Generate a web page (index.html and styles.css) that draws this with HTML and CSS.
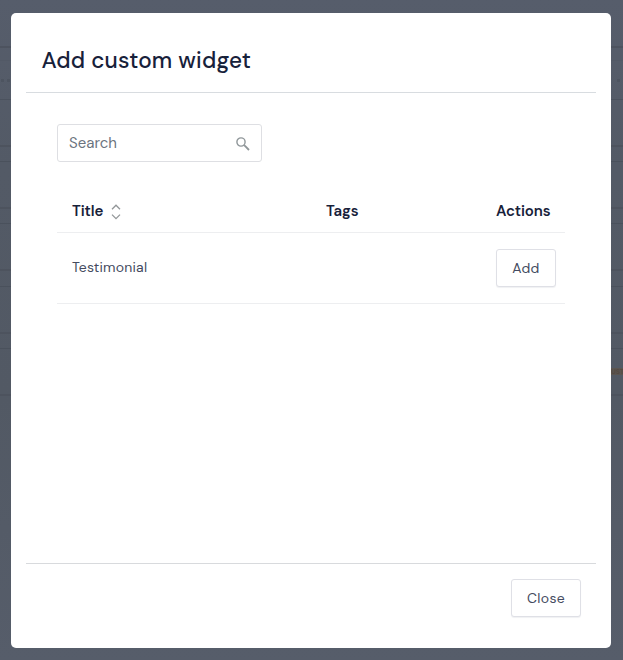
FILE: index.html
```html
<!DOCTYPE html>
<html lang="en">
<head>
<meta charset="utf-8">
<title>Add custom widget</title>
<link rel="stylesheet" href="styles.css">
</head>
<body>
<div class="page">
  <div class="bar bar-top"></div>
  <div class="bar bar-tools"></div>
  <div class="dots"><i></i><i></i><b></b><i></i><i></i></div>
  <div class="panel"></div><div class="gap"></div>
  <div class="panel"></div><div class="gap"></div>
  <div class="panel"></div><div class="gap"></div>
  <div class="panel"></div><div class="gap"></div>
  <div class="panel tagged"><span class="tag">UST</span></div>
</div>
<main class="modal">
  <header class="head"><h1>Add custom widget</h1></header>
  <section class="body">
    <label class="search">
      <input type="text" placeholder="Search">
      <svg width="14" height="14" viewBox="0 0 14 14" fill="none" stroke="#8f9699"><circle cx="5" cy="5" r="4.1" stroke-width="1.4"/><path d="M8.2 8.2L13 13" stroke-width="1.8"/></svg>
    </label>
    <div class="table">
      <div class="row th">
        <div class="title">Title
          <svg width="10" height="16" viewBox="0 0 10 16" fill="none" stroke="#929698" stroke-width="1.3"><path d="M1 5.2L5 1.2l4 4M1 10.6l4 4 4-4"/></svg>
        </div>
        <div class="tags">Tags</div>
        <div class="actions">Actions</div>
      </div>
      <div class="row td">
        <div class="name">Testimonial</div>
        <div></div>
        <div><button class="add">Add</button></div>
      </div>
    </div>
  </section>
  <footer class="foot"><button class="close">Close</button></footer>
</main>
</body>
</html>
```
FILE: styles.css
```css
* { box-sizing: border-box; }
body {
  margin: 0;
  height: 660px;
  overflow: hidden;
  background: #545b68;
  color: #444b60;
  font-family: "DM Sans", Inter, sans-serif;
}
.page {
  height: 660px;
  background: linear-gradient(#565d6b 0, #535a66 25%, #525964 60%, #565d6a 100%);
}
.bar-top { height: 48px; border-bottom: 2px solid #4d535f; }
.bar-tools { height: 13px; border-bottom: 1px solid #525966; }
.dots { height: 39px; padding-top: 18px; border-bottom: 1px solid #4b525e; display: flex; gap: 3px; }
.dots i { flex: none; width: 3px; height: 3px; background: #4d5460; }
.dots i:first-child { margin-left: 1px; }
.dots b { flex: none; width: 601px; }
.panel { height: 47px; border-bottom: 2px solid #4d535e; }
.gap { height: 15.2px; border-bottom: 1px solid #4a515c; }
.tagged { display: flex; justify-content: flex-end; align-items: center; }
.tag { width: 12px; overflow: hidden; font-size: 7px; line-height: 7px; font-weight: 800; color: #544a43; background: #5a5551; }
.modal {
  position: absolute;
  left: 11px;
  top: 13px;
  width: 600px;
  height: 635px;
  padding: 0 15px;
  display: flex;
  flex-direction: column;
  background: #fff;
  border-radius: 5px;
}
.head { height: 80px; padding: 33px 15.5px 0; border-bottom: 1px solid #d8dce0; }
h1 { margin: 0; font-size: 22.5px; line-height: 30px; font-weight: 500; color: #17213a; white-space: nowrap; letter-spacing: .18px; }
.body { flex: 1; padding: 31px 31px 0; }
.search {
  width: 205px;
  height: 38px;
  padding: 0 11px;
  display: flex;
  align-items: center;
  justify-content: space-between;
  border: 1px solid #dedfe3;
  border-radius: 3px;
}
.search svg { margin-top: 2px; }
.search input { width: 140px; padding: 0; border: 0; outline: 0; font: 15px/20px "DM Sans", Inter, sans-serif; letter-spacing: 0; }
.search input::placeholder { color: #6b7480; opacity: 1; }
.table { margin-top: 28px; }
.row { display: grid; grid-template-columns: 254px 170px 70px; padding-left: 15px; border-bottom: 1px solid #edeef0; }
.th { height: 43px; padding-top: 11px; font-size: 15px; line-height: 20px; font-weight: 600; color: #17213a; align-items: start; letter-spacing: -.1px; }
.title { display: flex; align-items: center; gap: 8px; }
.title svg { margin-top: 2px; }
.td { height: 71px; padding-top: 16px; }
.name { padding-top: 8px; font-size: 14px; line-height: 20px; letter-spacing: .2px; }
button {
  height: 38px;
  padding: 0;
  display: block;
  background: #fff;
  border: 1px solid #dfe0e6;
  border-radius: 3px;
  box-shadow: 0 1px 1px #f0f1f3;
  color: #444b60;
  font: 14px/20px "DM Sans", Inter, sans-serif;
  letter-spacing: .3px;
}
.add { width: 60px; }
.close { width: 70px; }
.foot { height: 85px; padding: 15px 15px 0; display: flex; justify-content: flex-end; align-items: flex-start; border-top: 1px solid #d8dadd; }
```
